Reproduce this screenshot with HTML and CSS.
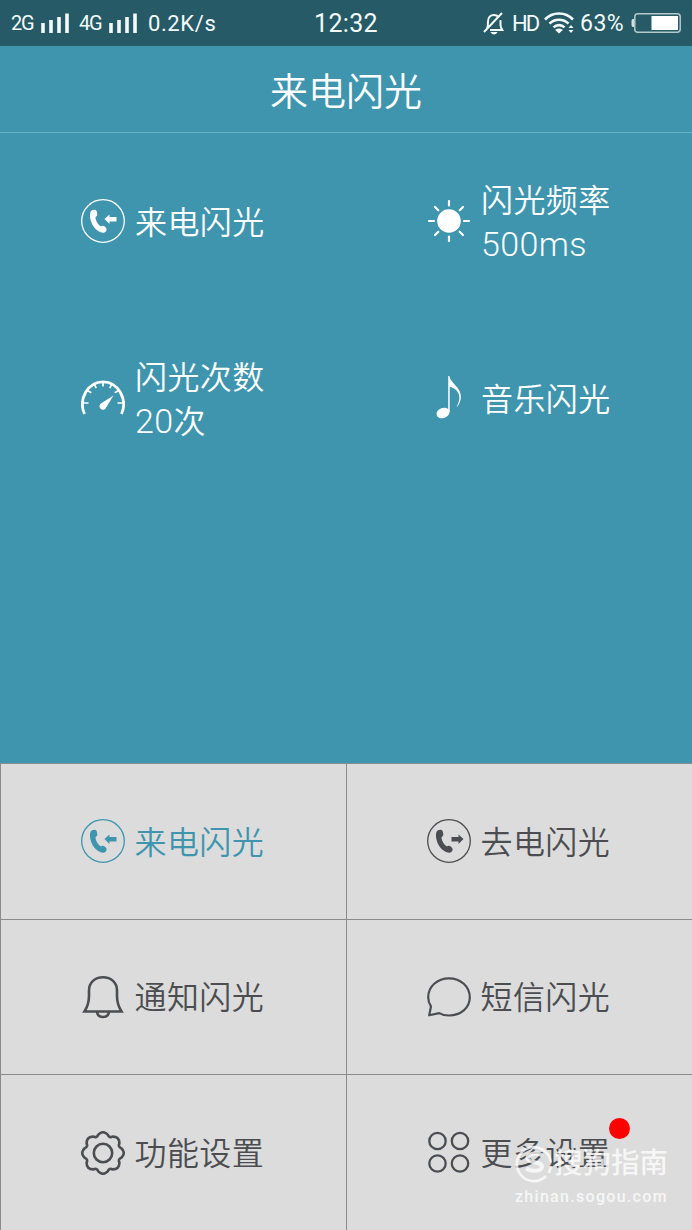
FILE: index.html
```
<!DOCTYPE html>
<html lang="zh-CN">
<head>
  <meta charset="UTF-8" />
  <meta name="viewport" content="width=device-width, initial-scale=1" />
  <title>来电闪光</title>
  <link rel="stylesheet" href="styles.css">
</head>
<body>

  <!-- Shared phone handset -->
  <svg class="defs" width="0" height="0">
    <symbol id="phone" viewBox="0 0 44 44">
      <circle cx="22" cy="22" r="21.3" fill="none" stroke="currentColor" stroke-width="1.3" />
      <path fill="currentColor" d="M11 11.3c1.7-.9 4-.6 4.6.6.6 1.3.9 3.7.4 4.8-.5 1-1.7.8-1.5 2.2.4 3.2 2.3 6.3 4.7 8.1 1.2.8 1.7-.5 3-.3 1.4.3 3.100 2 3.400 3.300.3 1.500-1.100 3.500-2.800 3.700-3.300.4-8.100-2.600-10.800-6.900-2.900-4.700-4.600-13.600-1-15.500z" />
    </symbol>
  </svg>

  <div class="status-bar">
    <div class="status-left">
      <span class="net">2G</span>
      <svg class="signal" width="28" height="20" viewBox="0 0 28 20">
        <path d="M2 10v10M10 7v13M18 4v16M26 .5V20" stroke="currentColor" stroke-width="3.6" />
      </svg>
      <span class="net net-second">4G</span>
      <svg class="signal" width="28" height="20" viewBox="0 0 28 20">
        <path d="M2 10v10M10 7v13M18 4v16M26 .5V20" stroke="currentColor" stroke-width="3.6" />
      </svg>
      <span class="speed">0.2K/s</span>
    </div>
    <div class="time">12:32</div>
    <div class="status-right">
      <svg width="22" height="23" viewBox="0 0 22 23" fill="none" stroke="currentColor" stroke-width="2">
        <path d="M4 16.500c1-2 1-4 1-7C5 5.500 7.500 3 11 3c2 0 3.500.8 4.600 1.900M17.500 8v5c0 2 .8 3.500 1.800 5H7M1 20L19 1" />
        <path d="M7.500 20h7c-1 3.300-6 3.300-7 0z" fill="currentColor" stroke="none" />
      </svg>
      <span class="hd">HD</span>
      <svg class="wifi" width="30" height="22" viewBox="0 0 30 22" fill="none" stroke="currentColor" stroke-width="2.6">
        <path d="M1 7.500c7.500-8 20.500-8 28 0M5.500 11.700c5-5.200 14-5.200 19 0M9.500 15.400c3-3 8-3 11 0" />
        <path d="M11.200 18c2-2 5.600-2 7.600 0L15 21.500z" fill="currentColor" stroke="none" />
        <path d="M24.500 16l2.500-3 2.500 3zM24.500 18l2.500 3 2.500-3z" fill="currentColor" stroke="none" />
      </svg>
      <span class="percent">63%</span>
      <svg class="battery" width="50" height="20" viewBox="0 0 50 20">
        <path d="M3 6H2Q.5 6 .5 8v4q0 2 1.500 2h1z" fill="#d5e0e2" />
        <rect x="3.800" y=".8" width="45.400" height="18.400" rx="3" fill="none" stroke="#b4c8cb" stroke-width="1.500" />
        <rect x="20.500" y="3" width="26.500" height="14" fill="#fff" />
      </svg>
    </div>
  </div>

  <div class="header">来电闪光</div>

  <div class="panel">
    <div class="item">
      <svg class="icon" viewBox="0 0 44 44">
        <use href="#phone" />
        <path d="M23.500 20l5-4.500v2.500h7v4.500h-7V25z" fill="currentColor" />
      </svg>
      <div class="label">来电闪光</div>
    </div>
    <div class="item">
      <svg class="icon" viewBox="0 0 44 44">
        <circle cx="22" cy="22" r="11.800" fill="currentColor" />
        <path d="M22 2v4.500M22 37.500V42M2 22h5M37 22h5M8 8l3.300 3.300M32.700 32.700L36 36M36 8l-3.300 3.300M11.300 32.700L8 36" stroke="currentColor" stroke-width="2.200" stroke-linecap="round" />
      </svg>
      <div class="label">闪光频率<br><span class="value">500ms</span></div>
    </div>
    <div class="item">
      <svg class="icon" viewBox="0 0 44 44" fill="none" stroke="currentColor">
        <path d="M3.500 38A20.500 22.500 0 1 1 40.500 38" stroke-width="2.800" />
        <path d="M22 6v4.500M13.200 8l2 4.200M30.800 8l-2 4.200M6.500 14.500l3.800 2.300M37.500 14.500l-3.800 2.300M2 27h5.500M42 27h-5.500" stroke-width="1.700" />
        <path d="M32.500 19.500l-7.200 11.800a3.500 3.500 0 1 1-4.600-4.300z" fill="currentColor" stroke="none" />
      </svg>
      <div class="label">闪光次数<br><span class="value">20</span>次</div>
    </div>
    <div class="item">
      <svg class="icon" viewBox="0 0 44 44">
        <ellipse cx="16" cy="37" rx="6.700" ry="5" transform="rotate(-20 16 37)" fill="currentColor" />
        <path d="M21.200 36V0h1.200c.6 7 11.800 11 11.500 21-.1 4.500-2 8-4.500 10.500 2-4 3.200-7.500 2.900-11-.4-5-4.800-8.800-9.600-9.700V36z" fill="currentColor" />
      </svg>
      <div class="label">音乐闪光</div>
    </div>
  </div>

  <div class="menu">
    <div class="item active">
      <svg class="icon" viewBox="0 0 44 44">
        <use href="#phone" />
        <path d="M23.500 20l5-4.500v2.500h7v4.500h-7V25z" fill="currentColor" />
      </svg>
      <div class="label">来电闪光</div>
    </div>
    <div class="item">
      <svg class="icon" viewBox="0 0 44 44">
        <use href="#phone" />
        <path d="M36.500 20l-5-4.500v2.500h-7v4.500h7V25z" fill="currentColor" />
      </svg>
      <div class="label">去电闪光</div>
    </div>
    <div class="item">
      <svg class="icon" viewBox="0 0 44 44" fill="none" stroke="currentColor" stroke-width="2.600">
        <path d="M3.500 36.500C7 31 8 27 8 21v-5.500C8 7.500 14 2.300 22 2.300s14 5.200 14 13.200V21c0 6 1 10 4.500 15.500z" />
        <path d="M16 37c.5 3.300 3 5 6 5s5.500-1.700 6-5" />
      </svg>
      <div class="label">通知闪光</div>
    </div>
    <div class="item">
      <svg class="icon" viewBox="0 0 44 44" fill="none" stroke="currentColor" stroke-width="2.200">
        <path d="M2.200 40.300L4 31.500C1.900 28.500 1.200 25.500 1.200 22.300 1.200 11.600 10.300 3.300 22 3.300s20.800 8.300 20.800 19-9.100 18.200-20.800 18.200c-3.800 0-7-.8-9.800-2.400z" stroke-linejoin="round" />
      </svg>
      <div class="label">短信闪光</div>
    </div>
    <div class="item">
      <svg class="icon" viewBox="0 0 44 44" fill="none" stroke="currentColor" stroke-width="2.600">
        <circle cx="22" cy="22" r="9.200" />
        <path d="M17.300 3.600Q22 -1.200 26.700 3.600Q28.500 7.300 31.500 5.600Q38.500 5.500 38.400 12.500Q36.700 15.500 40.400 17.300Q45.200 22 40.400 26.700Q36.700 28.500 38.400 31.500Q38.500 38.500 31.500 38.400Q28.500 36.700 26.700 40.400Q22 45.200 17.300 40.400Q15.500 36.700 12.500 38.400Q5.500 38.500 5.600 31.500Q7.300 28.500 3.600 26.700Q-1.200 22 3.600 17.300Q7.300 15.500 5.600 12.500Q5.500 5.500 12.500 5.600Q15.500 7.300 17.300 3.600z" stroke-linejoin="round" />
      </svg>
      <div class="label">功能设置</div>
    </div>
    <div class="item">
      <svg class="icon" viewBox="0 0 44 44" fill="none" stroke="currentColor" stroke-width="2.300">
        <circle cx="10.500" cy="10" r="8.200" />
        <circle cx="33" cy="10" r="8.200" />
        <circle cx="10.500" cy="32.500" r="8.200" />
        <circle cx="33" cy="32.500" r="8.200" />
      </svg>
      <div class="label">更多设置<span class="dot"></span></div>
    </div>
  </div>

  <div class="watermark">
    <div class="brand">
      <svg width="38" height="38" viewBox="0 0 38 38" fill="none" stroke="currentColor">
        <path d="M31 31A17 17 0 1 1 35.800 17.500M36 21a17 17 0 0 1-2.500 7" stroke-width="2.600" />
        <path d="M27.500 10.500c-5-3-15-2.500-15 2.500 0 5.500 14.500 3 14.500 8.500 0 5-10 5.500-16 2" stroke-width="4" />
      </svg>
      <span>搜狗指南</span>
    </div>
    <div class="site">zhinan.sogou.com</div>
  </div>

</body>
</html>
```
FILE: styles.css
```
* {
  box-sizing: border-box;
}

body {
  font-family: Roboto, "Noto Sans CJK SC", sans-serif;
  background: #3e95ad;
  margin: 0;
  height: 1230px;
  position: relative;
  display: flex;
  flex-direction: column;
  overflow: hidden;
}

svg {
  display: block;
  flex-shrink: 0;
}

.defs {
  position: absolute;
}

/* status bar */
.status-bar {
  height: 46px;
  background: #255a66;
  color: #f2fafa;
  display: grid;
  grid-template-columns: 1fr auto 1fr;
  align-items: center;
  padding: 0 11px;
  font-size: 22px;
}

.status-left,
.status-right {
  display: flex;
  align-items: center;
}

.status-right {
  justify-content: flex-end;
}

.net {
  width: 24px;
  font-size: 20px;
  letter-spacing: -1.2px;
}

.net-second {
  margin-left: 10px;
}

.signal {
  margin-left: 6px;
}

.speed {
  margin-left: 11px;
  letter-spacing: 0.6px;
}

.time {
  font-size: 25px;
  letter-spacing: 0.3px;
}

.hd {
  margin-left: 7px;
  width: 27px;
  font-size: 22px;
  letter-spacing: -2px;
}

.wifi {
  margin-left: 5px;
}

.percent {
  margin-left: 6px;
  font-size: 23px;
  letter-spacing: 0.4px;
}

.battery {
  margin-left: 7px;
}

/* title */
.header {
  height: 87px;
  padding-top: 2px;
  border-bottom: 1px solid #65b1c5;
  color: #fff;
  font-size: 38px;
  font-weight: 350;
  line-height: 88px;
  text-align: center;
}

/* settings on top, menu below */
.panel,
.menu {
  display: grid;
  grid-template-columns: 1fr 1fr;
}

.panel {
  height: 630px;
  grid-auto-rows: 177px;
  align-content: start;
  color: #fff;
}

.menu {
  flex: 1;
  grid-template-rows: repeat(3, 1fr);
  background: #dcdcdc;
  color: #4b4d50;
}

.item {
  display: flex;
  align-items: center;
  justify-content: center;
}

.menu .item {
  padding-right: 2px;
  border-top: 1px solid #8b8b8b;
  border-left: 1px solid #8b8b8b;
}

.menu .active {
  color: #3e95ad;
}

.icon {
  width: 44px;
  height: 44px;
  margin-right: 10px;
}

.panel .icon {
  margin-bottom: 1px;
}

.label {
  position: relative;
  width: 130px;
  padding-top: 3px;
  font-size: 32px;
  font-weight: 350;
  line-height: 44px;
  letter-spacing: 0.4px;
  white-space: nowrap;
}

.value {
  font-size: 34px;
  line-height: 1;
}

.dot {
  position: absolute;
  top: -11px;
  right: -19px;
  width: 21px;
  height: 21px;
  border-radius: 50%;
  background: #ff0000;
}

/* watermark */
.watermark {
  position: absolute;
  right: 23px;
  bottom: 21px;
  width: 154px;
  color: rgba(255, 255, 255, 0.75);
}

.brand {
  display: flex;
  align-items: center;
  font-size: 28.5px;
  font-weight: 500;
  line-height: 42px;
  white-space: nowrap;
}

.brand svg {
  margin-right: 1px;
}

.site {
  font-size: 16px;
  font-weight: 500;
  line-height: 24px;
  letter-spacing: 1.3px;
}
```
